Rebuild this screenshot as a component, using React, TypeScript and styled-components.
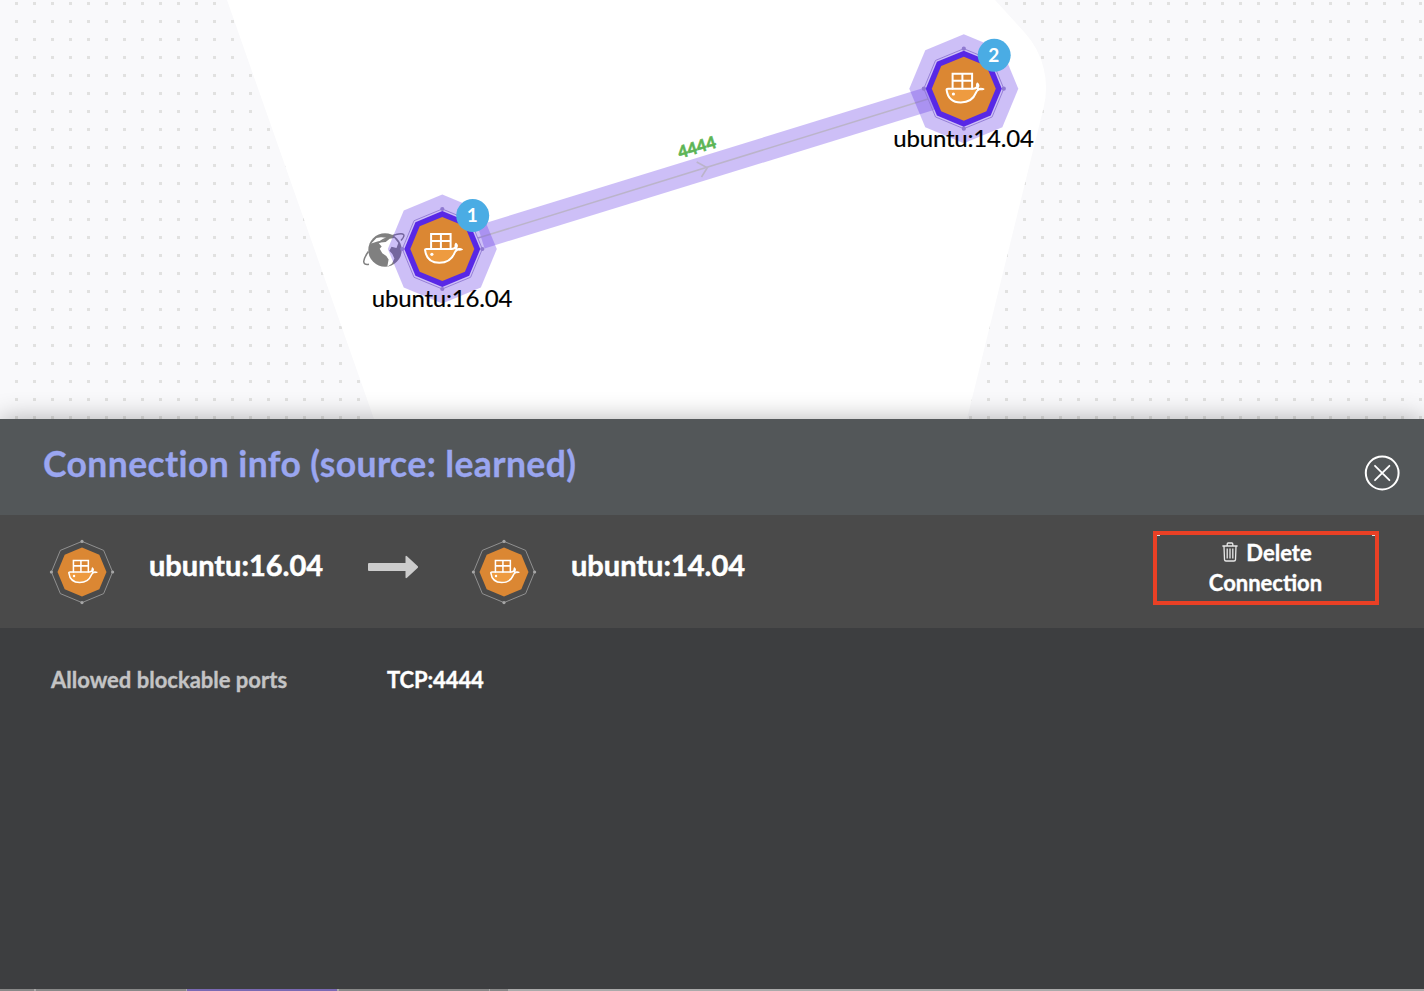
import React from "react";
import styled, { createGlobalStyle } from "styled-components";

const GlobalStyle = createGlobalStyle`
  * { box-sizing: border-box; }
  body { margin: 0; font-family: Lato, "Open Sans", sans-serif; }
`;

const Page = styled.main`
  display: flex;
  flex-direction: column;
  width: 1424px;
  height: 991px;
  overflow: hidden;
  background: #f9f9fb;
`;

const Canvas = styled.section`
  flex: 0 0 419px;
  background-image: linear-gradient(to right, #f9f9fb 15px, transparent 15px),
    linear-gradient(to bottom, #f9f9fb 2px, #e1e1e0 2px, #e1e1e0 5px, #f9f9fb 5px);
  background-size: 18px 18px;
`;

const Graph = styled.svg`
  display: block;
  font-family: Lato, "Open Sans", sans-serif;
`;

const Panel = styled.section`
  position: relative;
  flex: 1;
  display: flex;
  flex-direction: column;
  background: #3d3e40;
  box-shadow: 0 0 24px rgba(0, 0, 0, 0.3);
`;

const PanelHeader = styled.header`
  display: flex;
  justify-content: space-between;
  height: 96px;
  padding: 23px 24px 0 43px;
  background: #535759;
`;

const Title = styled.h1`
  margin: 0;
  font-size: 35.5px;
  line-height: 44px;
  font-weight: 700;
  letter-spacing: 0.4px;
  color: #9aa6f0;
  -webkit-text-stroke: 0.3px #9aa6f0;
`;

const CloseButton = styled.button`
  width: 36px;
  height: 36px;
  margin-top: 13px;
  padding: 0;
  border: 0;
  background: none;
`;

const ConnectionRow = styled.div`
  display: flex;
  height: 113px;
  padding: 16px 45px 0 49px;
  background: #4a4a4a;
`;

const Endpoint = styled.div<{ $width: number }>`
  display: flex;
  width: ${(p) => p.$width}px;
`;

const EndpointIcon = styled.svg`
  width: 66px;
  height: 66px;
  margin-top: 8px;
`;

const EndpointName = styled.span`
  margin: 16px 0 0 34px;
  font-size: 29px;
  line-height: 36px;
  font-weight: 700;
  color: #fff;
  -webkit-text-stroke: 0.5px #fff;
`;

const Arrow = styled.svg`
  width: 52px;
  height: 24px;
  margin: 24px 51px 0 0;
`;

const DeleteButton = styled.button`
  width: 226px;
  height: 74px;
  margin-left: auto;
  padding: 1px 40px 1px 39px;
  border: 4px solid #ea4025;
  background: linear-gradient(#ddd, #ddd) 0 0 / 3px 1px no-repeat,
    linear-gradient(#ddd, #ddd) 100% 0 / 3px 1px no-repeat;
  font-family: inherit;
  font-size: 22px;
  line-height: 30px;
  font-weight: 700;
  color: #fff;
  -webkit-text-stroke: 0.35px #fff;
`;

const Trash = styled.svg`
  width: 16px;
  height: 20px;
  margin: 0 8px 0 3px;
  vertical-align: -1px;
`;

const Details = styled.dl`
  flex: 1;
  display: grid;
  grid-template-columns: 336px 1fr;
  margin: 0;
  padding: 37px 51px;
  font-size: 22px;
  line-height: 30px;
  font-weight: 700;
`;

const Term = styled.dt`
  color: #c4c4c5;
  -webkit-text-stroke: 0.35px #c4c4c5;
`;

const Value = styled.dd`
  margin: 0;
  color: #fff;
  letter-spacing: -0.1px;
  -webkit-text-stroke: 0.35px #fff;
`;

const BottomStrip = styled.footer`
  display: flex;
  height: 2px;
  background: #aaa;
`;

const Tab = styled.span<{ $width: number; $gap: number; $active?: boolean }>`
  width: ${(p) => p.$width}px;
  margin-right: ${(p) => p.$gap}px;
  background: ${(p) => (p.$active ? "#7a69b3" : "#888")};
`;

const octagon = (r: number) =>
  Array.from({ length: 8 }, (_, i) => {
    const a = (i * Math.PI) / 4;
    return `${(r * Math.sin(a)).toFixed(2)},${(-r * Math.cos(a)).toFixed(2)}`;
  }).join(" ");

function Ring({ color, width }: { color: string; width: number }) {
  return (
    <g>
      <polygon points={octagon(40)} fill="none" stroke={color} strokeWidth={width} />
      {[[0, -40], [40, 0], [0, 40], [-40, 0]].map(([x, y]) => (
        <circle key={`${x},${y}`} cx={x} cy={y} r={2.1} fill={color} />
      ))}
    </g>
  );
}

function Whale() {
  return (
    <g stroke="#fff" strokeWidth="2" fill="none" strokeLinejoin="round" strokeLinecap="round">
      <path
        d="M-17.2 1.2Q-17.4 0 -15.8 0H9.5Q12 -0.2 13 -1.6L14.6 1.2Q13 1.8 12.2 4Q8.4 13.8 -3 13.8Q-15.6 13.8 -17.2 1.2Z"
        fill="#ee9b40"
      />
      <path d="M13.6 -5.4Q12.2 -3.4 14 -1Q15.8 -3.4 13.6 -5.4Z" fill="#fff" strokeWidth="1.6" />
      <path d="M14 0.2Q17.4 -1.2 20 0.4Q16.8 1.8 14 0.2Z" fill="#fff" strokeWidth="1.2" />
      <path d="M-11.2 0V-15H8.3V0M-1.4 -15V0M-11.2 -8H8.3" strokeLinejoin="miter" />
      <circle cx="-10.4" cy="5.3" r="1.6" fill="#fff" stroke="none" />
    </g>
  );
}

function Globe() {
  return (
    <g transform="translate(385 250)">
      <circle r="16.7" fill="#808080" />
      <g fill="#fff">
        <path d="M-6.7 -7.3L0.7 -8L4.7 -11.3L9.3 -12L13.3 -7L11.5 -2L6.5 -3.3L4.3 0.7L7.3 4L9.4 8.5L7 13.4L2.3 16.8L3.6 9.6L1.3 6L-2.7 3.3L-5.3 -1.3L-3.3 -3.6Z" />
        <path d="M-13.8 -6.6L-8.5 -12L-4 -12.8L1.5 -12.2L-2 -9.6L-7.6 -8.6Z" />
      </g>
      <path
        d="M-16.6 1.5C-21.8 9 -24 15.6 -16 14.2M-14.5 -1C-6.5 -8 3 -13.6 11 -15.4C19 -17.4 21.4 -15.4 16 -9.6"
        fill="none"
        stroke="#808080"
        strokeWidth="1.5"
      />
    </g>
  );
}

interface NodeProps {
  x: number;
  y: number;
  label: string;
  count: number;
}

function GraphNode({ x, y, label, count }: NodeProps) {
  return (
    <g transform={`translate(${x} ${y})`}>
      <Ring color="#a79bc9" width={0.9} />
      <polygon points={octagon(54.5)} fill="#5a2ae6" fillOpacity="0.3" />
      <polygon points={octagon(38)} fill="#5828e6" />
      <polygon points={octagon(32)} fill="#db8733" />
      <Whale />
      <circle cx="30.4" cy="-33.4" r="16.5" fill="#4aace4" />
      <text x="30" y="-26.8" textAnchor="middle" fontSize="19" fontWeight="700" fill="#fff">
        {count}
      </text>
      <text x="-70.5" y="58.3" fontSize="24" textLength="140.5" fill="#000" stroke="#000" strokeWidth="0.2">
        {label}
      </text>
    </g>
  );
}

function ContainerIcon() {
  return (
    <EndpointIcon viewBox="0 0 66 66">
      <g transform="translate(33 33) scale(0.765)">
        <Ring color="#a6a6a6" width={1} />
        <polygon points={octagon(32)} fill="#db8733" />
        <Whale />
      </g>
    </EndpointIcon>
  );
}

export default function App() {
  return (
    <Page>
      <GlobalStyle />
      <Canvas>
        <Graph width="1424" height="419" viewBox="0 0 1424 419">
          <path d="M227 0L374 419H967L1043.5 108A82 82 0 0 0 1025 33L995 0Z" fill="#fff" />
          <Globe />
          <path d="M481 237L931 98.2" stroke="#5a2ae6" strokeOpacity="0.3" strokeWidth="24" />
          <path d="M478 238L928 99" stroke="#bbb4ca" strokeWidth="1.6" />
          <path d="M696.7 162L707.3 167.8L701.5 177" fill="none" stroke="#bbb4ca" strokeWidth="1.6" />
          <text
            transform="translate(680 158.8) rotate(-17.2)"
            fontSize="17"
            fontWeight="900"
            textLength="39"
            lengthAdjust="spacingAndGlyphs"
            fill="#5cb556"
            stroke="#5cb556"
            strokeWidth="0.5"
          >
            4444
          </text>
          <GraphNode x={442.3} y={249} label="ubuntu:16.04" count={1} />
          <GraphNode x={963.8} y={88.7} label="ubuntu:14.04" count={2} />
        </Graph>
      </Canvas>
      <Panel>
        <PanelHeader>
          <Title>Connection info (source: learned)</Title>
          <CloseButton aria-label="Close">
            <svg width="36" height="36" viewBox="0 0 36 36" fill="none" stroke="#fff" strokeLinecap="round">
              <circle cx="18.2" cy="18" r="16.4" strokeWidth="2" />
              <path d="M11 10.8L25.4 25.2M25.4 10.8L11 25.2" strokeWidth="1.8" />
            </svg>
          </CloseButton>
        </PanelHeader>
        <ConnectionRow>
          <Endpoint $width={319}>
            <ContainerIcon />
            <EndpointName>ubuntu:16.04</EndpointName>
          </Endpoint>
          <Arrow viewBox="0 0 52 24">
            <path
              d="M0 9Q0 8 1 8H37.5V2Q37.5 0 39 1.2L49.8 11.2Q50.6 12 49.8 12.8L39 22.8Q37.5 24 37.5 22V16H1Q0 16 0 15Z"
              fill="#ccc"
            />
          </Arrow>
          <Endpoint $width={300}>
            <ContainerIcon />
            <EndpointName>ubuntu:14.04</EndpointName>
          </Endpoint>
          <DeleteButton>
            <Trash viewBox="0 0 16 20" fill="none" stroke="#e8e8e8" strokeWidth="1.3">
              <path d="M0.4 4H15.6M5.2 3.6V2Q5.2 1 6.2 1H9.8Q10.8 1 10.8 2V3.6M2 4.2L2.5 17.6Q2.6 19 4 19H12Q13.4 19 13.5 17.6L14 4.2M5.2 6.5V16.5M8 6.5V16.5M10.8 6.5V16.5" />
            </Trash>
            Delete Connection
          </DeleteButton>
        </ConnectionRow>
        <Details>
          <Term>Allowed blockable ports</Term>
          <Value>TCP:4444</Value>
        </Details>
        <BottomStrip>
          <Tab $width={34} $gap={2} />
          <Tab $width={150} $gap={1} />
          <Tab $width={150} $gap={2} $active />
          <Tab $width={150} $gap={1} />
          <Tab $width={18} $gap={0} />
        </BottomStrip>
      </Panel>
    </Page>
  );
}
